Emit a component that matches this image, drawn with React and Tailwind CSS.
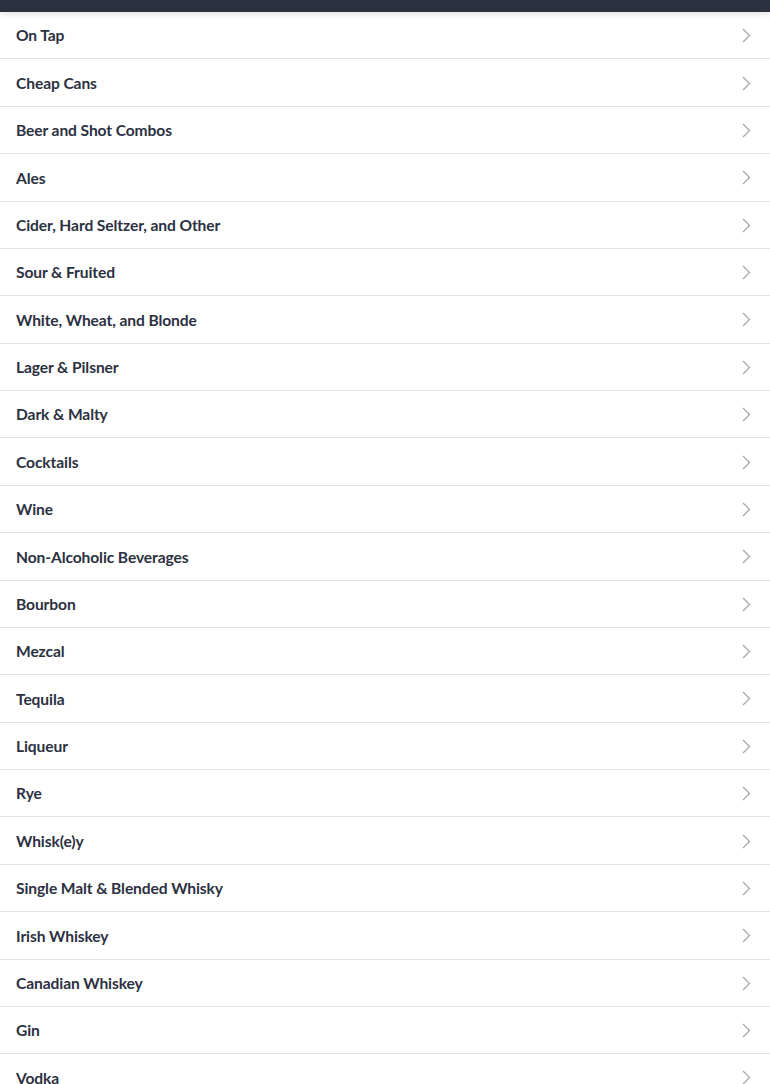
import React from "react";

const items = [
  "On Tap",
  "Cheap Cans",
  "Beer and Shot Combos",
  "Ales",
  "Cider, Hard Seltzer, and Other",
  "Sour & Fruited",
  "White, Wheat, and Blonde",
  "Lager & Pilsner",
  "Dark & Malty",
  "Cocktails",
  "Wine",
  "Non-Alcoholic Beverages",
  "Bourbon",
  "Mezcal",
  "Tequila",
  "Liqueur",
  "Rye",
  "Whisk(e)y",
  "Single Malt & Blended Whisky",
  "Irish Whiskey",
  "Canadian Whiskey",
  "Gin",
  "Vodka",
];

function Chevron() {
  return (
    <svg width="10" height="16" viewBox="0 0 10 16" fill="none" className="shrink-0 mt-[2px]">
      <path d="M2 1 L8.5 7.5 L2 14" stroke="#a8a8a8" strokeWidth="1.3" />
    </svg>
  );
}

export default function App() {
  return (
    <div className="w-[770px] h-[1084px] overflow-hidden bg-white" style={{ fontFamily: "Lato, 'Noto Sans', sans-serif" }}>
      <div className="h-[12px] bg-[#2c3142] shadow-[0_2px_6px_rgba(0,0,0,0.12)] relative z-10" />
      <ul>
        {items.map((t) => (
          <li key={t} className="h-[47.38px] border-b border-[#e2e2e2] flex items-center justify-between pl-4 pr-[19px]">
            <span className="mt-[2px] text-[15.6px] font-bold text-[#2c3142] tracking-[-0.1px]">{t}</span>
            <Chevron />
          </li>
        ))}
      </ul>
    </div>
  );
}
